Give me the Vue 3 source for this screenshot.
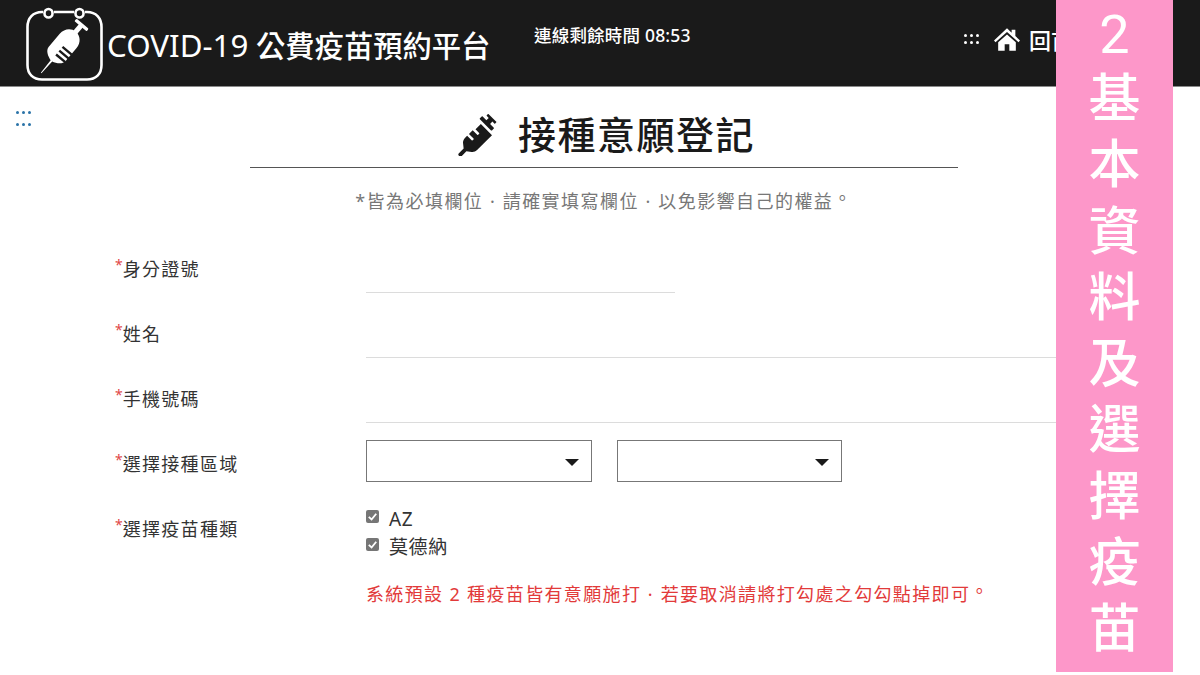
<script setup>
const fields = [
  { label: '身分證號', cls: 'short' },
  { label: '姓名', cls: 'long' },
  { label: '手機號碼', cls: 'long' },
]
const banner = ['2', '基', '本', '資', '料', '及', '選', '擇', '疫', '苗']
</script>

<template>
  <div class="page" lang="zh-TW">
    <header class="topbar">
      <div class="brand">
        <svg class="logo" viewBox="0 0 77 74" fill="none">
          <path d="M17 5H16C7 5 1.5 11 1.5 20V58C1.5 67 7 72.5 16 72.5H61C70 72.5 75.5 67 75.5 58V20C75.5 11 70 5 61 5H59M28 5H48" stroke="#fff" stroke-width="2.6"/>
          <rect x="18.5" y="2" width="8" height="8.5" rx="4" stroke="#fff" stroke-width="2.6"/>
          <rect x="49.5" y="2" width="8" height="8.5" rx="4" stroke="#fff" stroke-width="2.6"/>
          <g transform="rotate(40 37 40)" fill="#fff">
            <rect x="29" y="9.5" width="16" height="3.4" rx="1.2"/>
            <rect x="34.5" y="12" width="5" height="10"/>
            <path d="M26 32C26 25 31 20 37 20S48 25 48 32V49C48 54 42 57 38 58L37.4 74H36.6L36 58C32 57 26 54 26 49Z"/>
            <rect x="36.5" y="39" width="12" height="2.4" fill="#1a1a1a"/>
            <rect x="36.5" y="44" width="12" height="2.4" fill="#1a1a1a"/>
            <rect x="36.5" y="49" width="12" height="2.4" fill="#1a1a1a"/>
          </g>
        </svg>
        <span class="brand-name"><span class="latin">COVID-19</span> 公費疫苗預約平台</span>
      </div>
      <div class="timer">連線剩餘時間 08:53</div>
      <nav class="nav">
        <span class="dots light"><i></i><i></i><i></i><i></i><i></i><i></i></span>
        <svg class="home" viewBox="0 0 28 24"><path fill="#fff" d="M14 0 L19 4.6V1.5H23V8.3L28 13 26.4 15 14 4 1.6 15 0 13ZM4.5 15 14 6.6 23.5 15V24H16.5V17H11.5V24H4.5Z"/></svg>
        <span class="nav-text">回首頁</span>
        <i class="nav-tail"></i>
      </nav>
    </header>

    <div class="content">
      <span class="dots blue"><i></i><i></i><i></i><i></i><i></i><i></i></span>
      <div class="heading">
        <h1>
          <svg class="syringe" viewBox="0 0 512 512">
            <path fill="#1a1a1a" d="M201.5 174.8l55.7 55.8c3.1 3.1 3.1 8.2 0 11.3l-11.3 11.3c-3.1 3.1-8.2 3.1-11.3 0l-55.7-55.8-45.3 45.3 55.8 55.8c3.1 3.1 3.1 8.2 0 11.3l-11.3 11.3c-3.1 3.1-8.2 3.1-11.3 0L111 265.2l-26.4 26.4c-17.3 17.3-25.6 41.1-23 65.4l7.1 64.6-60.4 60.3c-6.2 6.2-6.2 16.4 0 22.6l11.3 11.3c6.2 6.2 16.4 6.2 22.6 0l60.3-60.3 64.6 7.2c23.9 2.6 47.9-5.4 65.4-23l181.9-181.9-135.7-135.7-64.9 65zM509.7 137.6L374.4 2.3c-3.1-3.1-8.2-3.1-11.3 0l-11.3 11.3c-3.1 3.1-3.1 8.2 0 11.3l22.6 22.6-28.3 28.3-45.3-45.3c-3.1-3.1-8.2-3.1-11.3 0l-22.6 22.6c-3.1 3.1-3.1 8.2 0 11.3l135.8 135.8c3.1 3.1 8.2 3.1 11.3 0l22.6-22.6c3.1-3.1 3.1-8.2 0-11.3l-45.3-45.3 28.3-28.3 22.6 22.6c3.1 3.1 8.2 3.1 11.3 0l11.3-11.3c3.1-3.1 3.1-8.2 0-11.3z"/>
          </svg>
          <span>接種意願登記</span>
        </h1>
      </div>
      <p class="notice">*皆為必填欄位<span class="c">·</span>請確實填寫欄位<span class="c">·</span>以免影響自己的權益<span class="p">。</span></p>

      <form class="form">
        <div v-for="f in fields" :key="f.label" class="row">
          <label class="label"><em>*</em>{{ f.label }}</label>
          <div class="field" :class="f.cls"></div>
        </div>
        <div class="row">
          <label class="label"><em>*</em>選擇接種區域</label>
          <div class="selects">
            <div class="select"><b></b></div>
            <div class="select"><b></b></div>
          </div>
        </div>
        <div class="row vaccine">
          <label class="label"><em>*</em>選擇疫苗種類</label>
          <div class="choices">
            <div class="check"><span class="box"><svg viewBox="0 0 14 14"><path d="M3 7.4 6 10.2 11 4" fill="none" stroke="#fff" stroke-width="2"/></svg></span><span class="opt">AZ</span></div>
            <div class="check"><span class="box"><svg viewBox="0 0 14 14"><path d="M3 7.4 6 10.2 11 4" fill="none" stroke="#fff" stroke-width="2"/></svg></span><span class="opt">莫德納</span></div>
            <p class="hint">系統預設 2 種疫苗皆有意願施打<span class="c">·</span>若要取消請將打勾處之勾勾點掉即可<span class="p">。</span></p>
          </div>
        </div>
      </form>
    </div>

    <aside class="banner">
      <span v-for="c in banner" :key="c">{{ c }}</span>
    </aside>
  </div>
</template>

<style scoped>
.page {
  position: relative;
  width: 1200px;
  height: 675px;
  overflow: hidden;
  background: #fff;
  font-family: "Noto Sans", "Noto Sans CJK TC", sans-serif;
  color: #222;
}
.topbar {
  height: 86px;
  background: #1a1a1a;
  border-bottom: 1px solid #8a8a8a;
  display: flex;
  align-items: flex-start;
  color: #fff;
}
.brand {
  display: flex;
  align-items: flex-start;
  margin: 7px 0 0 26px;
  width: 508px;
}
.logo { width: 77px; height: 74px; flex: none; }
.brand-name {
  font-size: 29.3px;
  font-weight: 500;
  line-height: 76px;
  margin-left: 4px;
  white-space: nowrap;
}
.latin { font-size: 31.3px; font-weight: 400; }
.timer {
  margin: 24px 0 0 0;
  font-size: 17.5px;
  line-height: 22px;
  letter-spacing: 0.2px;
  width: 430px;
  font-weight: 500;
  white-space: nowrap;
}
.nav {
  display: flex;
  align-items: center;
  margin-top: 26px;
  height: 26px;
}
.home { width: 26px; height: 23px; margin-left: 15px; }
.nav-text { font-size: 22px; margin-left: 9px; font-weight: 500; white-space: nowrap; }
.nav-tail { width: 2px; height: 7px; margin: 10px 0 0 76px; background: #a57e45; }
.dots {
  display: grid;
  grid-template-columns: repeat(3, 3px);
  gap: 4px 3px;
  width: 15px;
}
.dots i { width: 3px; height: 3px; border-radius: 50%; background: #fff; }
.dots.blue i { background: #2a73a8; }
.content {
  position: relative;
  height: 588px;
}
.dots.blue {
  position: absolute;
  left: 16px;
  top: 24px;
  gap: 9px 3px;
}
.heading {
  width: 708px;
  margin-left: 250px;
  height: 81px;
  border-bottom: 1px solid #555;
  box-sizing: border-box;
  padding: 20px 0 0 5px;
}
.heading h1 {
  margin: 0;
  display: flex;
  justify-content: center;
  align-items: center;
  gap: 18px;
  font-size: 38px;
  line-height: 54px;
  font-weight: 500;
  letter-spacing: 1.5px;
  color: #1a1a1a;
}
.syringe { width: 42px; height: 42px; margin-top: 1px; }
.c { display: inline-block; width: 1em; text-align: center; letter-spacing: 0; margin-right: 1.4px; }
.p { display: inline-block; transform: translateY(-3.5px); }
.notice {
  margin: 20px 0 0;
  text-align: center;
  width: 1208px;
  font-size: 18px;
  line-height: 26px;
  letter-spacing: 1.45px;
  color: #777;
}
.form {
  margin-top: 27px;
  padding-left: 115px;
}
.row {
  display: flex;
  height: 65px;
}
.label {
  width: 251px;
  font-size: 18px;
  line-height: 24px;
  letter-spacing: 1.3px;
  padding-top: 15.5px;
  color: #333;
  white-space: nowrap;
}
.label em {
  color: #e04848;
  font-style: normal;
  font-size: 14px;
  letter-spacing: 0;
  position: relative;
  top: -6px;
}
.field { height: 51px; border-bottom: 1px solid #dcdcdc; }
.field.short { width: 309px; }
.field.long { width: 800px; }
.selects { display: flex; gap: 25px; padding-top: 4px; }
.select {
  position: relative;
  width: 223.5px;
  height: 40px;
  border: 1px solid #777;
}
.select b {
  position: absolute;
  right: 12px;
  top: 18px;
  border-left: 7px solid transparent;
  border-right: 7px solid transparent;
  border-top: 7px solid #1a1a1a;
}
.choices { padding-top: 1px; }
.check {
  display: flex;
  align-items: flex-start;
  height: 28px;
  font-size: 19px;
  letter-spacing: 0.6px;
  color: #333;
}
.opt { line-height: 28px; margin-top: 3px; }
.box {
  width: 13px;
  height: 13px;
  border-radius: 2px;
  background: #767676;
  margin: 8px 10px 0 0;
  display: flex;
}
.box svg { width: 13px; height: 13px; }
.hint {
  margin: 23px 0 0;
  font-size: 18px;
  line-height: 26px;
  letter-spacing: 1.35px;
  color: #e23a3a;
  white-space: nowrap;
}
.banner {
  position: absolute;
  left: 1056px;
  top: 0;
  width: 117px;
  height: 672px;
  background: #fd97c9;
  color: #fff;
  display: flex;
  flex-direction: column;
  align-items: center;
  padding-top: 4px;
  box-sizing: border-box;
  font-size: 52px;
  font-weight: 500;
  line-height: 66.25px;
}
.banner span:first-child {
  height: 60px;
  line-height: 62px;
  font-family: Roboto, sans-serif;
  font-size: 54px;
  font-weight: 400;
}
</style>
